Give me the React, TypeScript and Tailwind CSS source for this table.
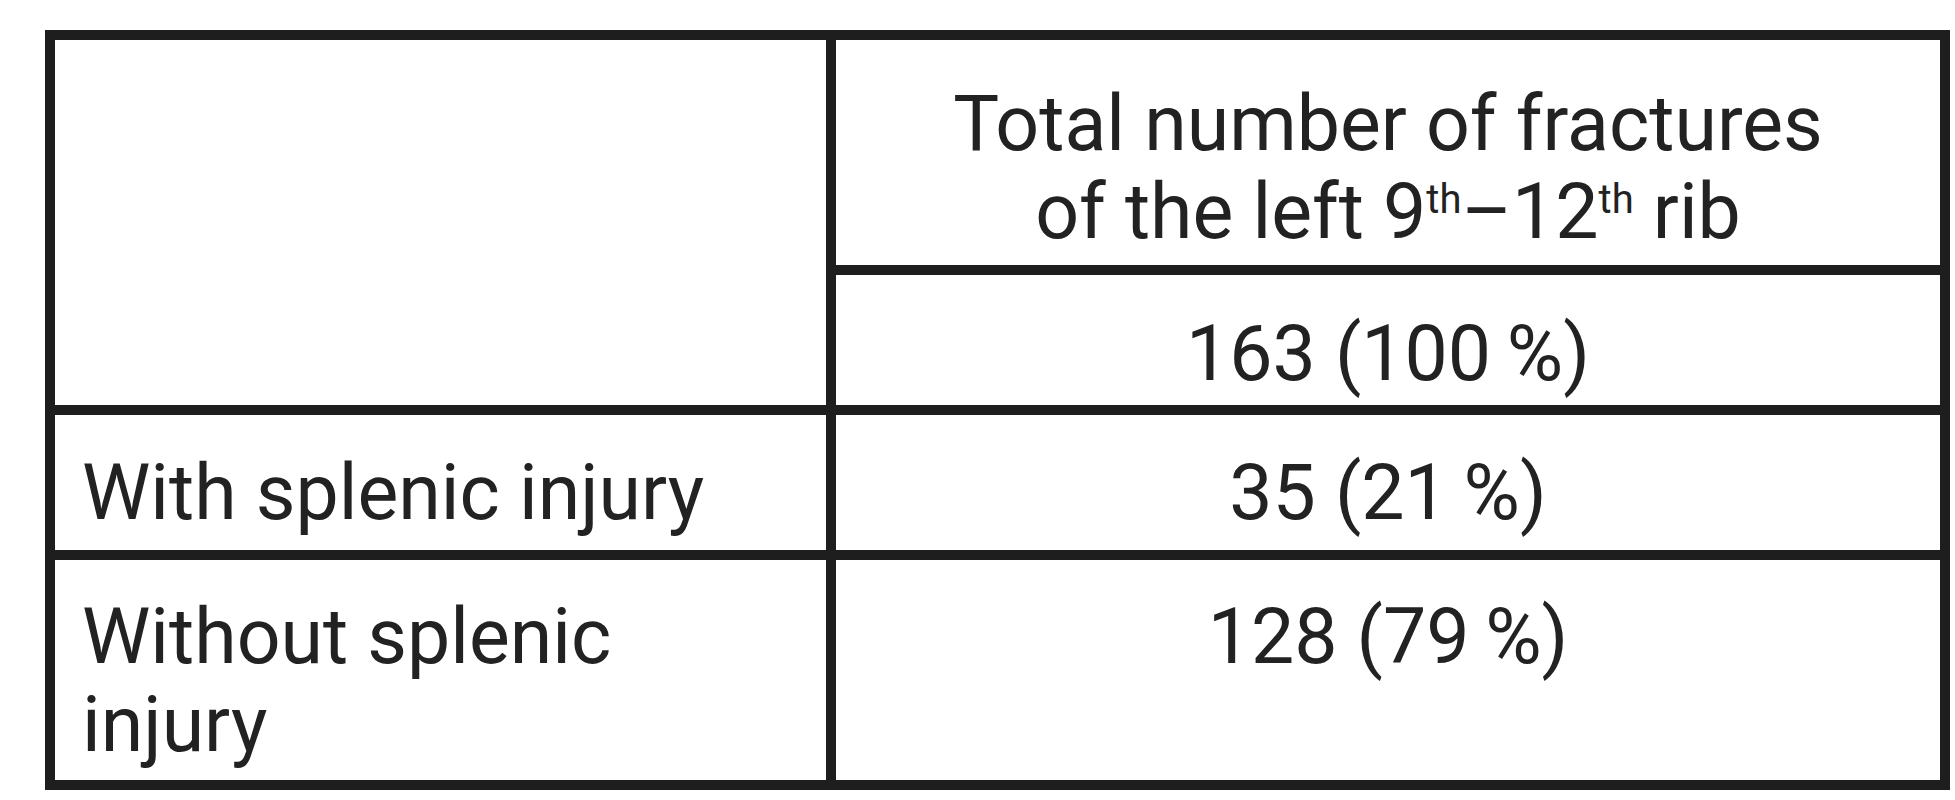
const font = "font-['Roboto','Liberation_Sans',sans-serif]";

const Sup = ({ children }: { children: string }) => (
  <span className="text-[40px] leading-none align-[25px]">{children}</span>
);

export default function App() {
  return (
    <div className={`w-[1955px] h-[800px] bg-white pt-[30px] pl-[45px] text-[#222] ${font}`}>
      <div className="w-[1905px] h-[760px] border-[10px] border-[#1e1e1e] flex flex-col text-[77px] leading-[88px]">
        {/* header rows */}
        <div className="flex h-[375px] border-b-[10px] border-[#1e1e1e]">
          <div className="w-[781px] border-r-[10px] border-[#1e1e1e]" />
          <div className="flex-1 flex flex-col">
            <div className="h-[235px] border-b-[10px] border-[#1e1e1e] pt-[40px] text-center">
              Total number of fractures
              <br />
              of the left 9<Sup>th</Sup>–12<Sup>th</Sup> rib
            </div>
            <div className="flex-1 pt-[35px] text-center">163 (100&#8201;%)</div>
          </div>
        </div>

        {/* with splenic injury */}
        <div className="flex h-[145px] border-b-[10px] border-[#1e1e1e]">
          <div className="w-[781px] border-r-[10px] border-[#1e1e1e] px-[27px] pt-[34px]">
            With splenic injury
          </div>
          <div className="flex-1 pt-[34px] text-center">35 (21&#8201;%)</div>
        </div>

        {/* without splenic injury */}
        <div className="flex flex-1">
          <div className="w-[781px] border-r-[10px] border-[#1e1e1e] px-[27px] pt-[33px]">
            Without splenic injury
          </div>
          <div className="flex-1 pt-[33px] text-center">128 (79&#8201;%)</div>
        </div>
      </div>
    </div>
  );
}
